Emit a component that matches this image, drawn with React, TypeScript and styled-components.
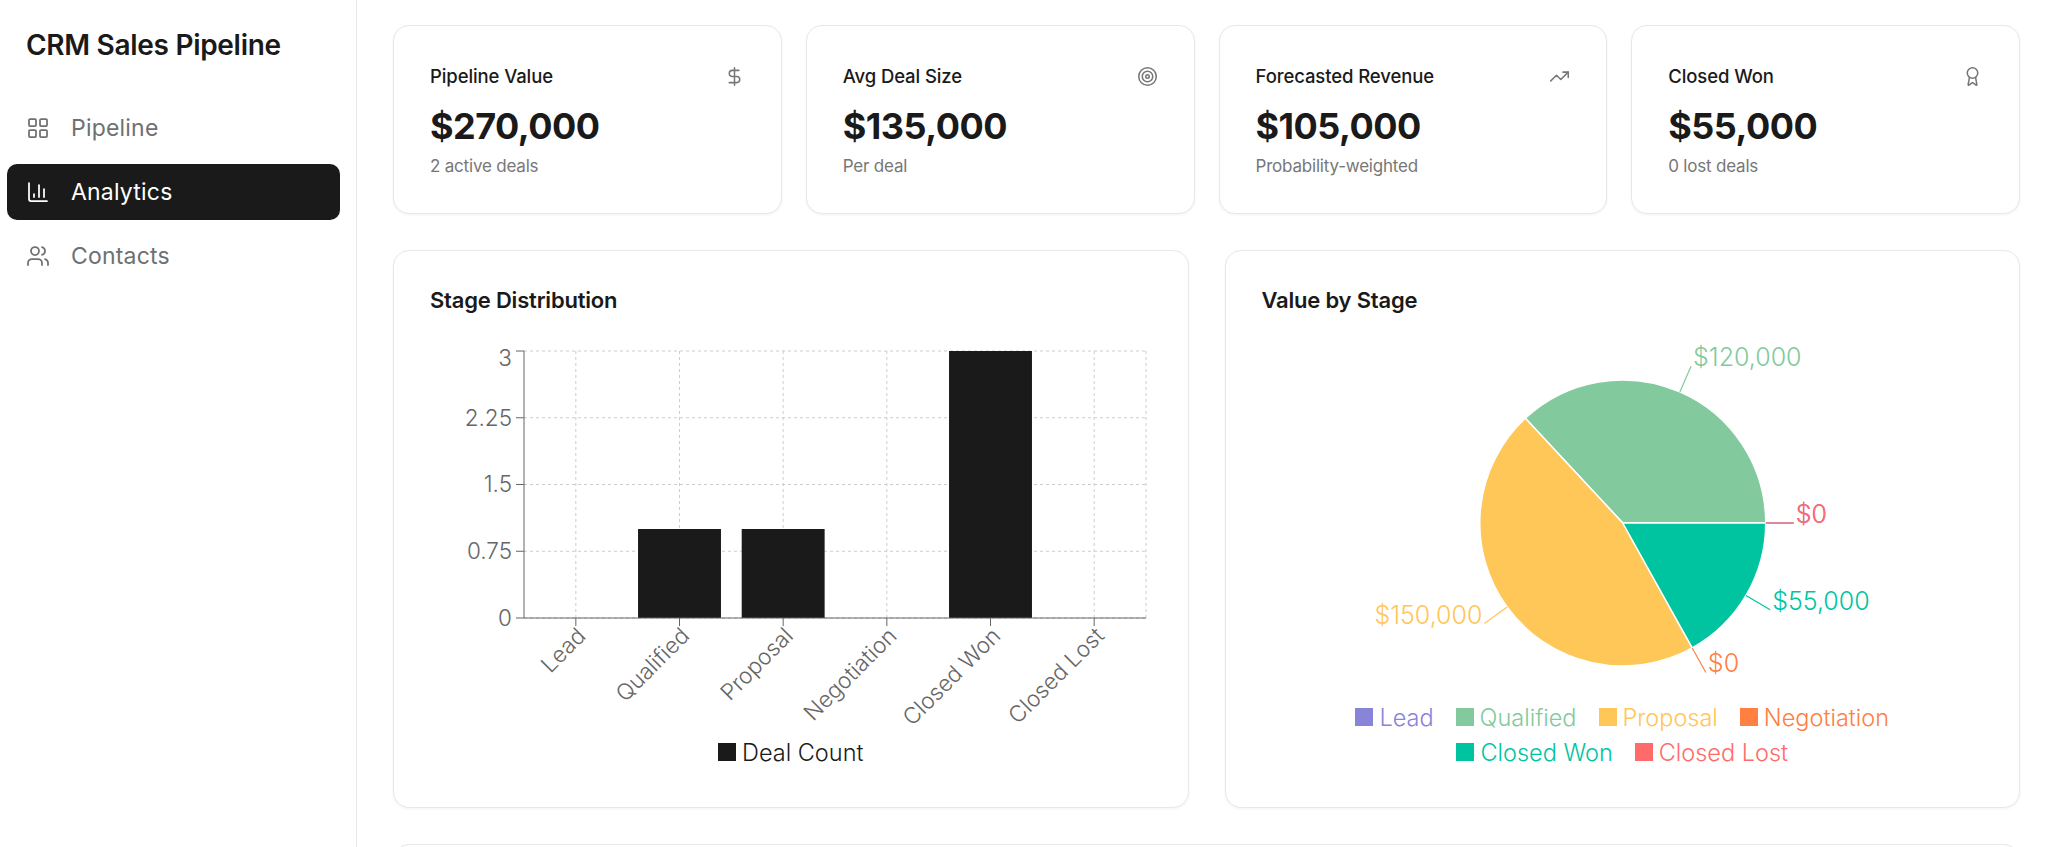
import React from "react";
import styled, { createGlobalStyle } from "styled-components";
import {
  Award,
  ChartColumn,
  DollarSign,
  LayoutGrid,
  Target,
  TrendingUp,
  Users,
} from "lucide-react";

const GlobalStyle = createGlobalStyle`
  html, body {
    margin: 0;
    padding: 0;
    background: #ffffff;
    font-family: "Inter", "Noto Sans", sans-serif;
    color: #1a1a1a;
  }
  * {
    box-sizing: border-box;
  }
`;

const Layout = styled.div`
  display: flex;
  height: 100vh;
  overflow: hidden;
`;

const Sidebar = styled.aside`
  width: 357px;
  flex-shrink: 0;
  border-right: 1px solid #e6e6e6;
  padding: 26px 16px 0 7px;
  display: flex;
  flex-direction: column;
`;

const Brand = styled.h1`
  margin: 0 0 36px 19px;
  font-size: 28px;
  line-height: 38px;
  font-weight: 600;
  letter-spacing: -0.3px;
`;

const NavList = styled.nav`
  display: flex;
  flex-direction: column;
  gap: 8px;
`;

const NavItem = styled.a<{ $active?: boolean }>`
  display: flex;
  align-items: center;
  gap: 21px;
  height: 56px;
  padding: 0 19px;
  border-radius: 10px;
  font-size: 23px;
  letter-spacing: 0.2px;
  text-decoration: none;
  cursor: pointer;
  color: ${({ $active }) => ($active ? "#ffffff" : "#707070")};
  background: ${({ $active }) => ($active ? "#1a1a1a" : "transparent")};
`;

const Main = styled.main`
  flex: 1;
  padding: 25px 28px 0 36px;
  display: flex;
  flex-direction: column;
  gap: 36px;
  overflow: hidden;
`;

const StatGrid = styled.section`
  display: grid;
  grid-template-columns: repeat(4, 1fr);
  gap: 24px;
`;

const Card = styled.div`
  background: #ffffff;
  border: 1px solid #e8e8e8;
  border-radius: 16px;
  box-shadow: 0 1px 3px rgba(0, 0, 0, 0.05);
`;

const StatCard = styled(Card)`
  padding: 36px 36px 36px;
`;

const StatHead = styled.div`
  display: flex;
  justify-content: space-between;
  align-items: center;
  height: 28px;
  color: #777777;
`;

const StatLabel = styled.span`
  font-size: 18.5px;
  font-weight: 500;
  letter-spacing: -0.1px;
  color: #1a1a1a;
`;

const StatValue = styled.div`
  margin-top: 14px;
  font-size: 36px;
  line-height: 44px;
  font-weight: 700;
  letter-spacing: -0.5px;
`;

const StatNote = styled.div`
  margin-top: 7px;
  font-size: 17px;
  line-height: 22px;
  color: #777777;
  letter-spacing: -0.2px;
`;

const ChartGrid = styled.section`
  display: grid;
  grid-template-columns: 1fr 1fr;
  gap: 36px;
`;

const ChartCard = styled(Card)`
  padding: 35px 36px 41px;
  display: flex;
  flex-direction: column;
`;

const ChartTitle = styled.h3`
  margin: 0 0 20px;
  font-size: 22px;
  line-height: 28px;
  font-weight: 600;
  letter-spacing: -0.2px;
`;

const Legend = styled.ul`
  list-style: none;
  margin: 0 auto;
  padding: 0;
  max-width: 580px;
  display: flex;
  flex-wrap: wrap;
  justify-content: center;
  column-gap: 22px;
  row-gap: 7px;
`;

const LegendItem = styled.li<{ $color: string }>`
  display: flex;
  align-items: center;
  gap: 6px;
  height: 28px;
  font-size: 23.5px;
  font-weight: 300;
  color: ${({ $color }) => $color};
  &::before {
    content: "";
    width: 18px;
    height: 18px;
    background: ${({ $color }) => $color};
  }
`;

const TableCard = styled(Card)`
  height: 320px;
  flex-shrink: 0;
`;

const AxisText = styled.text`
  font-family: "Inter", "Noto Sans", sans-serif;
  font-size: 22.5px;
  font-weight: 300;
  fill: #666666;
`;

const PieLabel = styled.text`
  font-family: "Inter", "Noto Sans", sans-serif;
  font-size: 25px;
  font-weight: 300;
`;

const stats = [
  { label: "Pipeline Value", value: "$270,000", note: "2 active deals", Icon: DollarSign },
  { label: "Avg Deal Size", value: "$135,000", note: "Per deal", Icon: Target },
  { label: "Forecasted Revenue", value: "$105,000", note: "Probability-weighted", Icon: TrendingUp },
  { label: "Closed Won", value: "$55,000", note: "0 lost deals", Icon: Award },
];

const stages = [
  { name: "Lead", count: 0, value: 0, color: "#8884d8" },
  { name: "Qualified", count: 1, value: 120000, color: "#82ca9d" },
  { name: "Proposal", count: 1, value: 150000, color: "#ffc658" },
  { name: "Negotiation", count: 0, value: 0, color: "#ff8042" },
  { name: "Closed Won", count: 3, value: 55000, color: "#00c49f" },
  { name: "Closed Lost", count: 0, value: 0, color: "#ff6b6b" },
];

const money = (n: number) => "$" + n.toLocaleString("en-US");

// bar chart geometry
const BW = 721;
const BH = 404;
const PL = 94;
const PR = 716;
const PT = 17;
const PB = 284;
const MAX = 3;
const yTicks = [0, 0.75, 1.5, 2.25, 3];

const StageBarChart = () => {
  const band = (PR - PL) / stages.length;
  const yOf = (v: number) => PB - (v / MAX) * (PB - PT);
  return (
    <svg width={BW} height={BH}>
      <g stroke="#cccccc" strokeDasharray="3 3">
        {yTicks.map((t) => (
          <line key={t} x1={PL} x2={PR} y1={yOf(t)} y2={yOf(t)} />
        ))}
        {stages.map((s, i) => {
          const cx = PL + band * (i + 0.5);
          return <line key={s.name} x1={cx} x2={cx} y1={PT} y2={PB} />;
        })}
        <line x1={PR} x2={PR} y1={PT} y2={PB} />
      </g>
      {stages.map((s, i) => {
        const w = band * 0.8;
        const x = PL + band * i + band * 0.1;
        return s.count > 0 ? (
          <rect key={s.name} x={x} y={yOf(s.count)} width={w} height={PB - yOf(s.count)} fill="#1a1a1a" />
        ) : null;
      })}
      <g stroke="#666666">
        <line x1={PL} x2={PL} y1={PT} y2={PB} />
        <line x1={PL} x2={PR} y1={PB} y2={PB} />
        {yTicks.map((t) => (
          <line key={t} x1={PL - 8} x2={PL} y1={yOf(t)} y2={yOf(t)} />
        ))}
        {stages.map((s, i) => {
          const cx = PL + band * (i + 0.5);
          return <line key={s.name} x1={cx} x2={cx} y1={PB} y2={PB + 8} />;
        })}
      </g>
      {yTicks.map((t) => (
        <AxisText key={t} x={PL - 12} y={yOf(t) + (t === MAX ? 7 : 0)} dy="0.355em" textAnchor="end">
          {t}
        </AxisText>
      ))}
      {stages.map((s, i) => {
        const cx = PL + band * (i + 0.5);
        const y = PB + 8;
        return (
          <AxisText key={s.name} x={cx} y={y} dy="0.71em" textAnchor="end" transform={`rotate(-45 ${cx} ${y})`}>
            {s.name}
          </AxisText>
        );
      })}
    </svg>
  );
};

// pie chart geometry
const PW = 721;
const PH = 369;
const CX = 360.75;
const CY = 189;
const R = 143;
const LR = 171;

const polar = (deg: number, r: number) => {
  const a = (deg * Math.PI) / 180;
  return [CX + r * Math.cos(a), CY - r * Math.sin(a)];
};

const StagePieChart = () => {
  const total = stages.reduce((sum, s) => sum + s.value, 0);
  let angle = 0;
  const slices = stages.map((s) => {
    const start = angle;
    const sweep = (s.value / total) * 360;
    angle += sweep;
    return { ...s, start, end: start + sweep, mid: start + sweep / 2 };
  });
  return (
    <svg width={PW} height={PH}>
      {slices.map((s) => {
        if (s.value === 0) return null;
        const [x1, y1] = polar(s.start, R);
        const [x2, y2] = polar(s.end, R);
        const large = s.end - s.start > 180 ? 1 : 0;
        return (
          <path
            key={s.name}
            d={`M${CX},${CY} L${x1},${y1} A${R},${R} 0 ${large} 0 ${x2},${y2} Z`}
            fill={s.color}
            stroke="#ffffff"
            strokeWidth={1.5}
          />
        );
      })}
      {slices.map((s) => {
        const [ax, ay] = polar(s.mid, R);
        const [bx, by] = polar(s.mid, LR);
        const anchor = bx >= CX ? "start" : "end";
        return (
          <g key={s.name}>
            <line x1={ax} y1={ay} x2={bx} y2={by} stroke={s.color} strokeWidth={1.2} />
            <PieLabel x={bx + (anchor === "start" ? 2 : -2)} y={by} fill={s.color} textAnchor={anchor}>
              {money(s.value)}
            </PieLabel>
          </g>
        );
      })}
    </svg>
  );
};

const navItems = [
  { label: "Pipeline", Icon: LayoutGrid },
  { label: "Analytics", Icon: ChartColumn, active: true },
  { label: "Contacts", Icon: Users },
];

export default function App() {
  return (
    <>
      <GlobalStyle />
      <Layout>
        <Sidebar>
          <Brand>CRM Sales Pipeline</Brand>
          <NavList>
            {navItems.map(({ label, Icon, active }) => (
              <NavItem key={label} $active={active}>
                <Icon size={24} strokeWidth={1.75} />
                {label}
              </NavItem>
            ))}
          </NavList>
        </Sidebar>
        <Main>
          <StatGrid>
            {stats.map(({ label, value, note, Icon }) => (
              <StatCard key={label}>
                <StatHead>
                  <StatLabel>{label}</StatLabel>
                  <Icon size={21} strokeWidth={1.75} />
                </StatHead>
                <StatValue>{value}</StatValue>
                <StatNote>{note}</StatNote>
              </StatCard>
            ))}
          </StatGrid>
          <ChartGrid>
            <ChartCard>
              <ChartTitle>Stage Distribution</ChartTitle>
              <StageBarChart />
              <Legend>
                <LegendItem $color="#1a1a1a">Deal Count</LegendItem>
              </Legend>
            </ChartCard>
            <ChartCard>
              <ChartTitle>Value by Stage</ChartTitle>
              <StagePieChart />
              <Legend>
                {stages.map((s) => (
                  <LegendItem key={s.name} $color={s.color}>
                    {s.name}
                  </LegendItem>
                ))}
              </Legend>
            </ChartCard>
          </ChartGrid>
          <TableCard />
        </Main>
      </Layout>
    </>
  );
}
